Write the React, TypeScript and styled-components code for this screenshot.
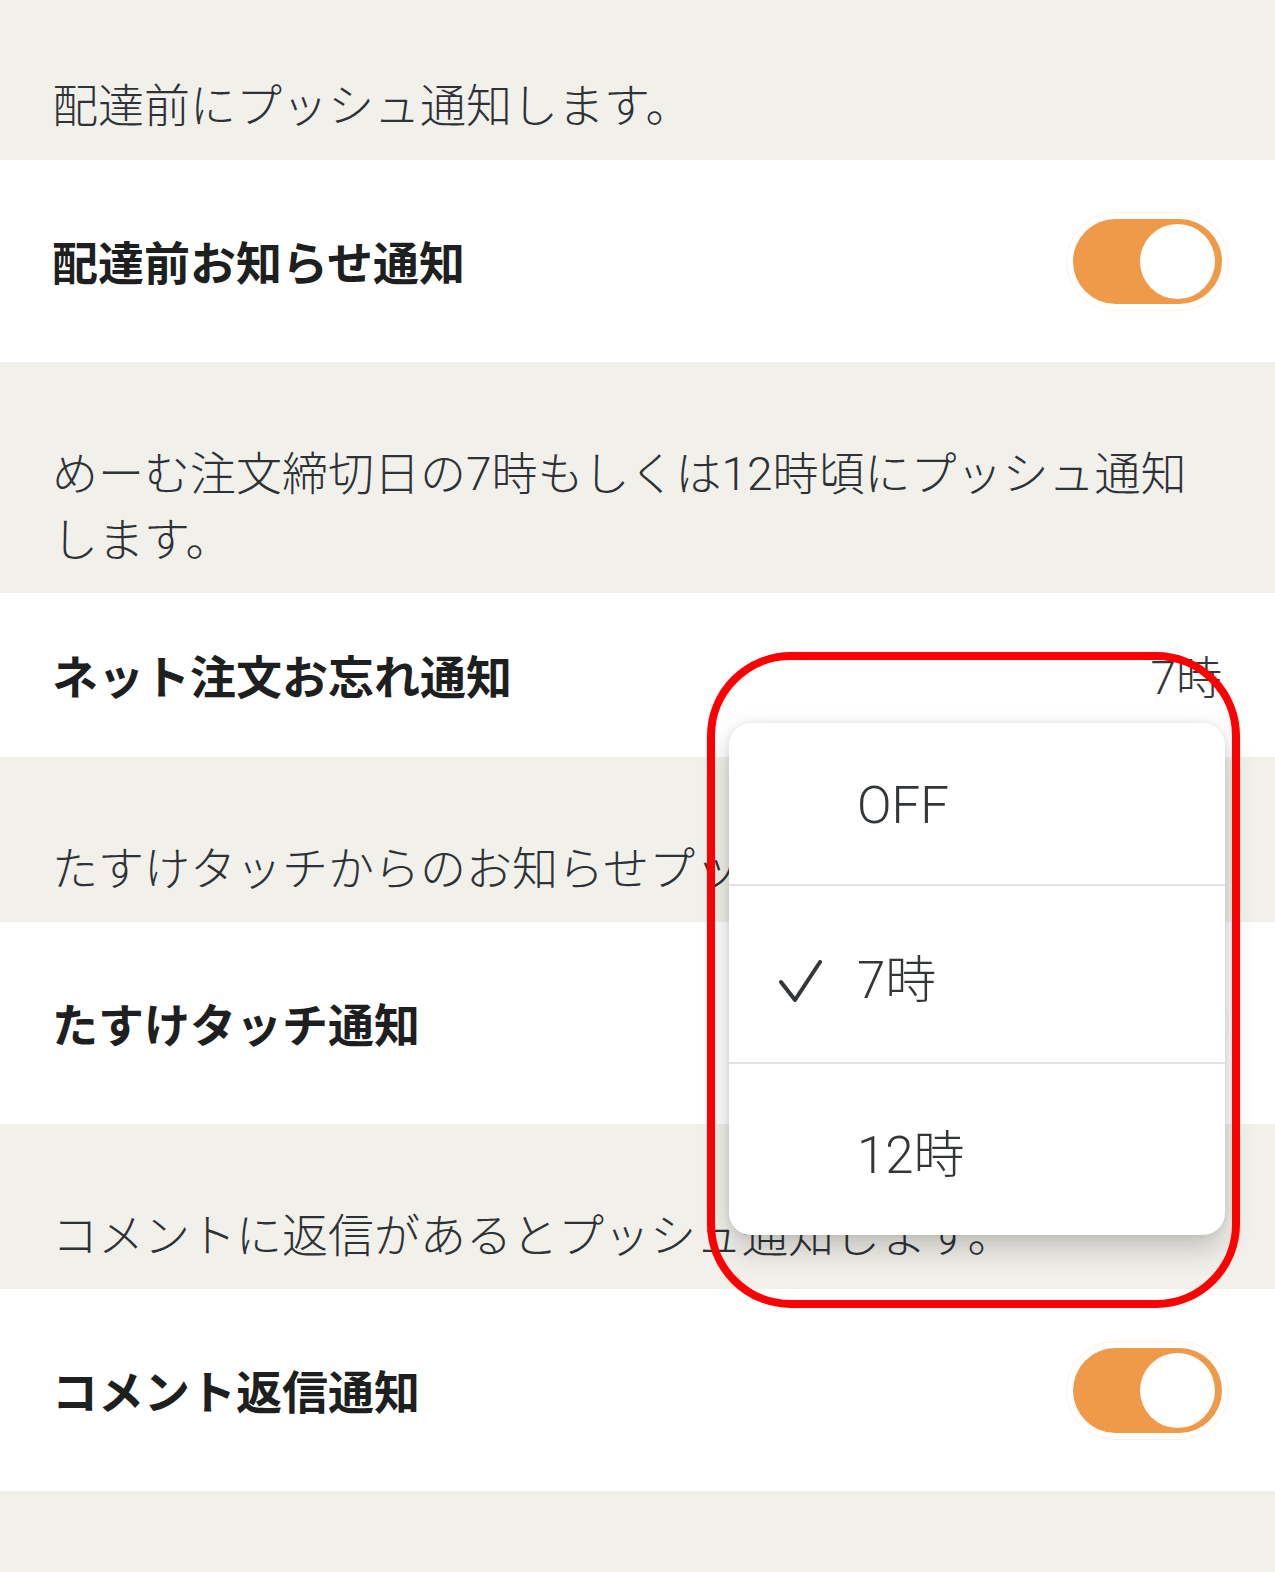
import React from "react";
import styled, { createGlobalStyle } from "styled-components";

const GlobalStyle = createGlobalStyle`
  html, body { margin: 0; padding: 0; background: #ffffff; }
  body {
    font-family: Roboto, "Noto Sans CJK JP", sans-serif;
    -webkit-font-smoothing: antialiased;
  }
  * { box-sizing: border-box; }
`;

const Page = styled.div`
  position: relative;
  width: 1275px;
  height: 1572px;
  overflow: hidden;
  background: #f2f0eb;
  display: flex;
  flex-direction: column;
`;

const Note = styled.p<{ $first?: boolean }>`
  margin: 0;
  padding: ${(p) => (p.$first ? "73px 52px 21px" : "79px 52px 20px")};
  background: #f2f0eb;
  color: #2e3236;
  font-size: 46px;
  line-height: 66px;
  font-weight: 300;
`;

const Row = styled.div<{ $tall?: boolean }>`
  display: flex;
  align-items: center;
  justify-content: space-between;
  height: ${(p) => (p.$tall ? 202 : 164)}px;
  padding: 0 53px 0 52px;
  background: #ffffff;
`;

const Title = styled.span`
  margin-top: 6px;
  font-size: 46px;
  line-height: 66px;
  font-weight: 700;
  color: #1e1f20;
`;

const Value = styled.span`
  margin-top: 6px;
  font-size: 46px;
  line-height: 66px;
  font-weight: 300;
  color: #33373a;
`;

const Toggle = styled.span`
  position: relative;
  flex: none;
  display: flex;
  justify-content: flex-end;
  align-items: center;
  width: 149px;
  height: 85px;
  padding: 0 7px;
  border-radius: 43px;
  background: #ee9a48;
  &::before {
    content: "";
    position: absolute;
    inset: -7px;
    border-radius: 50px;
    border: 1px solid rgba(238, 155, 74, 0.14);
  }
`;

const Knob = styled.span`
  width: 75px;
  height: 75px;
  border-radius: 50%;
  background: #ffffff;
`;

const Filler = styled.div`
  flex: 1;
  background: #f2f0eb;
`;

const Menu = styled.div`
  position: absolute;
  left: 729px;
  top: 723px;
  width: 496px;
  height: 512px;
  background: #ffffff;
  border-radius: 22px;
  box-shadow: 0 14px 30px rgba(0, 0, 0, 0.2), 0 0 8px rgba(0, 0, 0, 0.08);
  overflow: hidden;
  display: flex;
  flex-direction: column;
`;

const Item = styled.div<{ $h: number }>`
  height: ${(p) => p.$h}px;
  display: grid;
  grid-template-columns: 78px 1fr;
  align-items: center;
  padding-left: 50px;
  padding-top: 4px;
  font-size: 51px;
  line-height: 66px;
  font-weight: 300;
  color: #33373a;
  & + & {
    padding-top: 13px;
    border-top: 2px solid #e3e3e3;
  }
`;

const Check = styled.svg`
  width: 44px;
  height: 44px;
  display: block;
`;

const Highlight = styled.div`
  position: absolute;
  left: 707px;
  top: 652px;
  width: 533px;
  height: 656px;
  border: 8.5px solid #ff0000;
  border-radius: 84px;
  pointer-events: none;
`;

const CheckMark = () => (
  <Check viewBox="0 0 44 44">
    <polyline
      points="2,23 16,41 41,3"
      fill="none"
      stroke="#33373a"
      strokeWidth="4"
      strokeLinecap="round"
      strokeLinejoin="round"
    />
  </Check>
);

const Switch = () => (
  <Toggle>
    <Knob />
  </Toggle>
);

const options = [
  { label: "OFF", h: 161, checked: false },
  { label: "7時", h: 178, checked: true },
  { label: "12時", h: 173, checked: false },
];

export default function App() {
  return (
    <>
      <GlobalStyle />
      <Page>
        <Note $first>配達前にプッシュ通知します。</Note>
        <Row $tall>
          <Title>配達前お知らせ通知</Title>
          <Switch />
        </Row>
        <Note>めーむ注文締切日の7時もしくは12時頃にプッシュ通知します。</Note>
        <Row>
          <Title>ネット注文お忘れ通知</Title>
          <Value>7時</Value>
        </Row>
        <Note>たすけタッチからのお知らせプッシュ通知します。</Note>
        <Row $tall>
          <Title>たすけタッチ通知</Title>
          <Switch />
        </Row>
        <Note>コメントに返信があるとプッシュ通知します。</Note>
        <Row $tall>
          <Title>コメント返信通知</Title>
          <Switch />
        </Row>
        <Filler />

        <Menu>
          {options.map((o) => (
            <Item key={o.label} $h={o.h}>
              <span>{o.checked ? <CheckMark /> : null}</span>
              <span>{o.label}</span>
            </Item>
          ))}
        </Menu>
        <Highlight />
      </Page>
    </>
  );
}
